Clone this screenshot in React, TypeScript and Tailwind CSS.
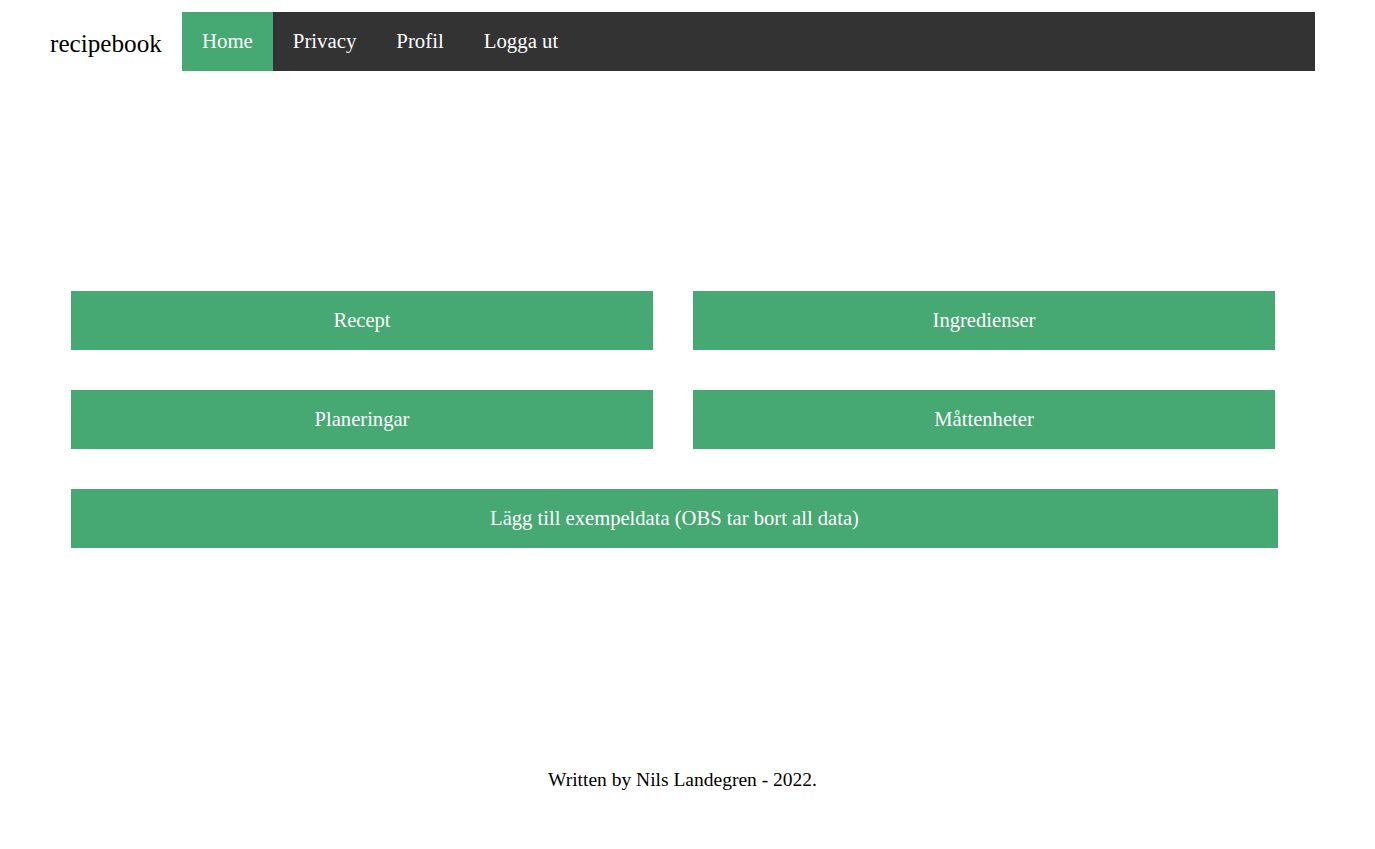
export default function App() {
  const btn =
    "flex h-[59px] items-center justify-center bg-[#46a872] pb-[1px] text-[20.6px] text-white";

  return (
    <div className="min-h-[849px] bg-white font-['Liberation_Serif',serif]">
      <header className="flex items-center pl-[50px] pr-[60px] pt-[12px]">
        <span className="mt-[4px] w-[132px] shrink-0 text-[25.2px] text-black">recipebook</span>
        <nav className="flex h-[59px] flex-1 items-stretch bg-[#333333]">
          {["Home", "Privacy", "Profil", "Logga ut"].map((item, i) => (
            <a
              key={item}
              href="#"
              className={`flex items-center px-[20px] pb-[2px] text-[20.8px] text-white ${
                i === 0 ? "bg-[#46a872]" : ""
              }`}
            >
              {item}
            </a>
          ))}
        </nav>
      </header>

      <main className="pl-[71px] pt-[220px]">
        <div className="grid w-[1204px] grid-cols-2 gap-x-[40px] gap-y-[40px]">
          <a href="#" className={btn}>Recept</a>
          <a href="#" className={btn}>Ingredienser</a>
          <a href="#" className={btn}>Planeringar</a>
          <a href="#" className={btn}>Måttenheter</a>
        </div>
        <button className={`${btn} mt-[40px] w-[1207px]`}>
          Lägg till exempeldata (OBS tar bort all data)
        </button>
      </main>

      <footer className="pl-[50px] pr-[60px] pt-[217px] text-center text-[19.5px] text-black">
        Written by Nils Landegren - 2022.
      </footer>
    </div>
  );
}
